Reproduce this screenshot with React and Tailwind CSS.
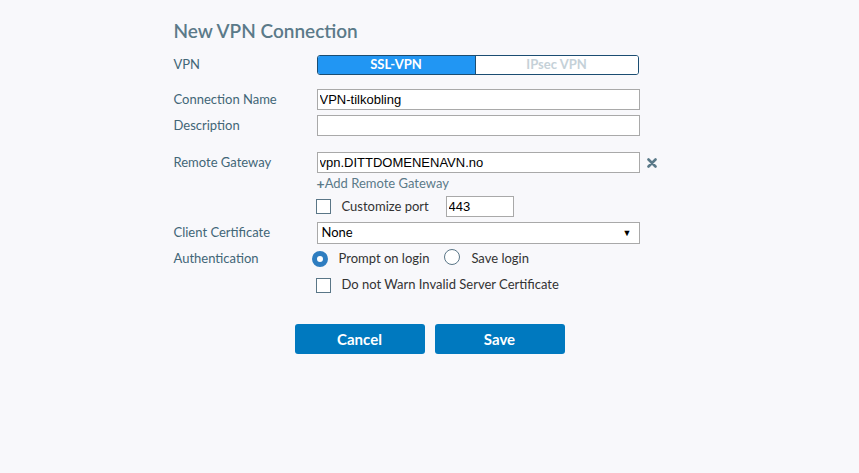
import { useState } from "react";

const labelCls = "w-[143px] shrink-0 text-[13px] text-[#426677]";
const inputCls =
  "h-[21px] w-[323px] border border-[#a9a9a9] bg-white px-[2px] text-[13px] text-black outline-none font-['Liberation_Sans',Arial,sans-serif]";

const Checkbox = () => (
  <span className="inline-block h-[15px] w-[15px] shrink-0 border border-[#5a7687] bg-white" />
);

const Radio = ({ checked }) =>
  checked ? (
    <span className="inline-block h-[16px] w-[16px] shrink-0 rounded-full border-[5px] border-[#2e7dc0] bg-white" />
  ) : (
    <span className="inline-block h-[16px] w-[16px] shrink-0 rounded-full border border-[#5a7687] bg-white" />
  );

export default function App() {
  const [name, setName] = useState("VPN-tilkobling");
  const [desc, setDesc] = useState("");
  const [gateway, setGateway] = useState("vpn.DITTDOMENENAVN.no");
  const [port, setPort] = useState("443");

  return (
    <div className="min-h-screen bg-[#f8f8fb] font-['Lato','Open_Sans',sans-serif]">
      <div className="mx-auto w-[512px] pt-[16px]">
        {/* Title */}
        <h1 className="h-[30px] text-[19px] font-semibold leading-[30px] text-[#5b7a89]">New VPN Connection</h1>

        {/* VPN type */}
        <div className="mt-[9px] flex h-[20px] items-center">
          <span className={labelCls}>VPN</span>
          <div className="flex h-[20px] w-[322px] overflow-hidden rounded-[3px] border border-[#1b4d72]">
            <div className="flex w-[157px] items-center justify-center bg-[#2196f3] text-[13px] font-bold text-white">
              SSL-VPN
            </div>
            <div className="flex flex-1 items-center justify-center border-l border-[#1b4d72] bg-white text-[13px] font-bold text-[#c5d1d8]">
              IPsec VPN
            </div>
          </div>
        </div>

        {/* Connection name */}
        <div className="mt-[14px] flex h-[21px] items-center">
          <span className={labelCls}>Connection Name</span>
          <input className={inputCls} value={name} onChange={(e) => setName(e.target.value)} />
        </div>

        {/* Description */}
        <div className="mt-[5px] flex h-[21px] items-center">
          <span className={labelCls}>Description</span>
          <input className={inputCls} value={desc} onChange={(e) => setDesc(e.target.value)} />
        </div>

        {/* Remote gateway */}
        <div className="mt-[16px] flex h-[21px] items-center">
          <span className={labelCls}>Remote Gateway</span>
          <input className={inputCls} value={gateway} onChange={(e) => setGateway(e.target.value)} />
          <svg className="ml-[7px]" width="10" height="10" viewBox="0 0 10 10">
            <path d="M1.5 1.5 L8.5 8.5 M8.5 1.5 L1.5 8.5" stroke="#5b7a89" strokeWidth="2.6" strokeLinecap="round" />
          </svg>
        </div>
        <div className="ml-[143px] mt-[1px] flex h-[20px] items-center text-[13px] text-[#5b7a89]">
          <span className="text-[14px] font-bold leading-none">+</span>
          <span>Add Remote Gateway</span>
        </div>

        {/* Customize port */}
        <div className="ml-[142px] mt-[2px] flex h-[21px] items-center">
          <Checkbox />
          <span className="ml-[11px] w-[104px] text-[13px] text-[#333]">Customize port</span>
          <input
            className="h-[21px] w-[68px] border border-[#a9a9a9] bg-white px-[2px] text-[13px] text-black outline-none font-['Liberation_Sans',Arial,sans-serif]"
            value={port}
            onChange={(e) => setPort(e.target.value)}
          />
        </div>

        {/* Client certificate */}
        <div className="mt-[5px] flex h-[22px] items-center">
          <span className={labelCls}>Client Certificate</span>
          <div className="flex h-[22px] w-[323px] items-center justify-between border border-[#a9a9a9] bg-white pl-[4px] pr-[7px] text-[13px] text-black">
            <span>None</span>
            <span className="text-[9px]">▼</span>
          </div>
        </div>

        {/* Authentication */}
        <div className="mt-[7px] flex h-[16px] items-center">
          <span className="w-[138px] shrink-0 text-[13px] text-[#426677]">Authentication</span>
          <Radio checked />
          <span className="ml-[11px] text-[13px] text-[#333]">Prompt on login</span>
          <span className="ml-[15px]">
            <Radio />
          </span>
          <span className="ml-[11px] text-[13px] text-[#333]">Save login</span>
        </div>

        {/* Do not warn */}
        <div className="ml-[142px] mt-[10px] flex h-[16px] items-center">
          <Checkbox />
          <span className="ml-[11px] text-[13px] text-[#333]">Do not Warn Invalid Server Certificate</span>
        </div>

        {/* Buttons */}
        <div className="mt-[31px] flex justify-center gap-[10px]">
          <button className="h-[30px] w-[130px] rounded-[3px] bg-[#0079bf] text-[15px] font-bold text-white">
            Cancel
          </button>
          <button className="h-[30px] w-[130px] rounded-[3px] bg-[#0079bf] text-[15px] font-bold text-white">
            Save
          </button>
        </div>
      </div>
    </div>
  );
}
